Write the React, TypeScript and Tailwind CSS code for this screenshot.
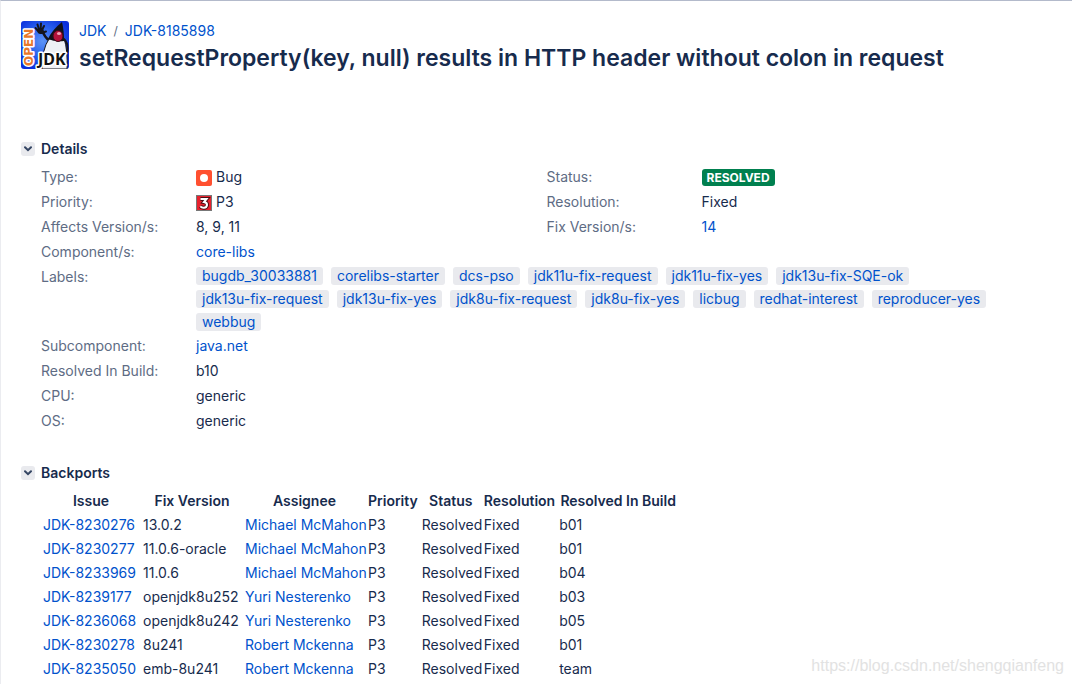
import { ReactNode, useState } from "react";

const LABELS = [
  "bugdb_30033881",
  "corelibs-starter",
  "dcs-pso",
  "jdk11u-fix-request",
  "jdk11u-fix-yes",
  "jdk13u-fix-SQE-ok",
  "jdk13u-fix-request",
  "jdk13u-fix-yes",
  "jdk8u-fix-request",
  "jdk8u-fix-yes",
  "licbug",
  "redhat-interest",
  "reproducer-yes",
  "webbug",
];

const BACKPORTS = [
  { issue: "JDK-8230276", version: "13.0.2", assignee: "Michael McMahon", build: "b01" },
  { issue: "JDK-8230277", version: "11.0.6-oracle", assignee: "Michael McMahon", build: "b01" },
  { issue: "JDK-8233969", version: "11.0.6", assignee: "Michael McMahon", build: "b04" },
  { issue: "JDK-8239177", version: "openjdk8u252", assignee: "Yuri Nesterenko", build: "b03" },
  { issue: "JDK-8236068", version: "openjdk8u242", assignee: "Yuri Nesterenko", build: "b05" },
  { issue: "JDK-8230278", version: "8u241", assignee: "Robert Mckenna", build: "b01" },
  { issue: "JDK-8235050", version: "emb-8u241", assignee: "Robert Mckenna", build: "team" },
];

function ProjectLogo() {
  return (
    <svg width="48" height="48" viewBox="0 0 48 48" className="shrink-0 rounded-[3px]" role="img" aria-label="OpenJDK">
      <defs>
        <radialGradient id="sky" cx="45%" cy="42%" r="60%">
          <stop offset="0" stopColor="#5c93f5" />
          <stop offset="0.5" stopColor="#2a62ee" />
          <stop offset="1" stopColor="#0a2fdc" />
        </radialGradient>
      </defs>
      <rect width="48" height="48" fill="url(#sky)" />
      {/* raised arm and hand */}
      <path d="M28 19 Q24 17 21 9" fill="none" stroke="#15151c" strokeWidth="2.5" />
      <path
        d="M18 11 L14.5 7 M18.5 10 L16.5 3.5 M19.5 10 L20 2.5 M20.5 10 L23 5 M20 12 L25 10.5"
        stroke="#15151c"
        strokeWidth="2"
        strokeLinecap="round"
      />
      <circle cx="19.5" cy="10" r="3" fill="#15151c" />
      {/* body, head, nose */}
      <path d="M28 18 Q21 28 21 48 L46 48 Q47 30 43 17 Z" fill="#eef0f5" stroke="#15151c" strokeWidth="1" />
      <path d="M41 1 Q31 9 27 18 Q34 21 43 20 Q43 9 41 1 Z" fill="#111118" />
      <path d="M43 18 Q48 23 46 32" fill="none" stroke="#15151c" strokeWidth="2" />
      <ellipse cx="37" cy="15" rx="5" ry="5.5" fill="#b3123a" stroke="#3b0a18" strokeWidth="1" />
      <ellipse cx="38" cy="12.5" rx="2" ry="1.5" fill="#f0a7b6" />
      <text
        transform="translate(12 45) rotate(-90)"
        fontFamily="'DejaVu Sans', sans-serif"
        fontWeight="700"
        fontSize="12"
        fill="#e8782a"
        stroke="#fff"
        strokeWidth="3"
        strokeLinejoin="round"
        paintOrder="stroke"
      >
        OPEN
      </text>
      <text
        x="17"
        y="44"
        fontFamily="'Noto Sans', sans-serif"
        fontWeight="700"
        fontSize="16"
        fill="#111"
        stroke="#fff"
        strokeWidth="3"
        strokeLinejoin="round"
        paintOrder="stroke"
      >
        JDK
      </text>
    </svg>
  );
}

function BugIcon() {
  return (
    <svg width="16" height="16" viewBox="0 0 16 16" className="mt-0.5" aria-hidden="true">
      <rect width="16" height="16" rx="2" fill="#ff5030" />
      <circle cx="8" cy="8" r="4" fill="#fff" />
    </svg>
  );
}

function PriorityIcon() {
  return (
    <svg width="16" height="16" viewBox="0 0 16 16" className="mt-0.5" aria-hidden="true">
      <rect x="0.5" y="0.5" width="15" height="15" fill="#e8212d" stroke="#777" />
      <path
        d="M4.5 4 H10.5 L8 7 Q11.2 7.5 11 10 Q10.5 13 7.5 12.7 Q5.5 12.6 4.3 11.4"
        fill="none"
        stroke="#4a0d12"
        strokeWidth="4"
      />
      <path
        d="M4.5 4 H10.5 L8 7 Q11.2 7.5 11 10 Q10.5 13 7.5 12.7 Q5.5 12.6 4.3 11.4"
        fill="none"
        stroke="#fff"
        strokeWidth="2"
      />
    </svg>
  );
}

function Link({ children }: { children: ReactNode }) {
  return (
    <a href="#" className="text-[#0052cc] hover:underline">
      {children}
    </a>
  );
}

function Section({ title, className, children }: { title: string; className: string; children: ReactNode }) {
  const [isOpen, setIsOpen] = useState(true);

  return (
    <section className={className}>
      <h2 className="h-5">
        <button
          aria-expanded={isOpen}
          onClick={() => setIsOpen(!isOpen)}
          className="flex h-5 items-center gap-1.5 font-semibold"
        >
          <span className="flex size-3.5 items-center justify-center rounded-[3px] bg-[#e9eaee]">
            <svg width="8" height="6" viewBox="0 0 8 6" className={isOpen ? "" : "-rotate-90"}>
              <path d="M1 1.2 L4 4.2 L7 1.2" fill="none" stroke="#344563" strokeWidth="2" strokeLinecap="round" />
            </svg>
          </span>
          {title}
        </button>
      </h2>
      {isOpen && <div className="pl-5">{children}</div>}
    </section>
  );
}

function Field({ name, children }: { name: string; children: ReactNode }) {
  return (
    <div className="flex leading-[25px]">
      <dt className="w-[155px] shrink-0 text-[#5e6c84]">{name}:</dt>
      <dd className="flex min-w-0 items-center gap-1">{children}</dd>
    </div>
  );
}

function App() {
  return (
    <main className="relative min-h-screen border-t border-l border-t-[#b3bacb] border-l-[#ebecf0] bg-white pr-5 pl-5 pt-5 font-['Inter','Liberation_Sans',sans-serif] text-sm text-[#172b4d]">
      <header className="flex gap-2.5">
        <ProjectLogo />
        <div>
          <nav aria-label="Breadcrumb" className="flex h-5 items-center gap-[7px]">
            <Link>JDK</Link>
            <span className="text-xs text-[#5e6c84]">/</span>
            <Link>JDK-8185898</Link>
          </nav>
          <h1 className="mt-0.5 text-[23px] leading-[30px] font-semibold">
            setRequestProperty(key, null) results in HTTP header without colon in request
          </h1>
        </div>
      </header>

      <Section title="Details" className="mt-[66px]">
        <div className="mt-[5px] grid grid-cols-2">
          <dl>
            <Field name="Type">
              <BugIcon />
              Bug
            </Field>
            <Field name="Priority">
              <PriorityIcon />
              P3
            </Field>
            <Field name="Affects Version/s">8, 9, 11</Field>
          </dl>
          <dl>
            <Field name="Status">
              <span className="mt-0.5 rounded-[3px] bg-[#00804f] px-[5px] text-xs leading-[17px] font-bold text-white">
                RESOLVED
              </span>
            </Field>
            <Field name="Resolution">Fixed</Field>
            <Field name="Fix Version/s">
              <Link>14</Link>
            </Field>
          </dl>
        </div>
        <dl>
          <Field name="Component/s">
            <Link>core-libs</Link>
          </Field>
          <Field name="Labels">
            <ul className="flex flex-wrap gap-x-2 gap-y-[5px] pt-[3px] pr-3 pb-0.5">
              {LABELS.map((label) => (
                <li key={label} className="rounded-[3px] bg-[#e9eaee] px-1.5 leading-[18px]">
                  <Link>{label}</Link>
                </li>
              ))}
            </ul>
          </Field>
          <Field name="Subcomponent">
            <Link>java.net</Link>
          </Field>
          <Field name="Resolved In Build">b10</Field>
          <Field name="CPU">generic</Field>
          <Field name="OS">generic</Field>
        </dl>
      </Section>

      <Section title="Backports" className="mt-[30px]">
        <table className="mt-1.5 ml-0.5 table-fixed whitespace-nowrap leading-6">
          <thead>
            <tr className="text-center">
              <th className="w-[100px] pr-1 font-semibold">Issue</th>
              <th className="w-[102px] pr-1 font-semibold">Fix Version</th>
              <th className="w-[123px] pr-1 font-semibold">Assignee</th>
              <th className="w-[53px] pr-1 font-semibold">Priority</th>
              <th className="w-[62px] pr-1 font-semibold">Status</th>
              <th className="w-[75px] pr-1 font-semibold">Resolution</th>
              <th className="w-[118px] font-semibold">Resolved In Build</th>
            </tr>
          </thead>
          <tbody>
            {BACKPORTS.map((row) => (
              <tr key={row.issue}>
                <td>
                  <Link>{row.issue}</Link>
                </td>
                <td>{row.version}</td>
                <td>
                  <Link>{row.assignee}</Link>
                </td>
                <td>P3</td>
                <td>Resolved</td>
                <td>Fixed</td>
                <td>{row.build}</td>
              </tr>
            ))}
          </tbody>
        </table>
      </Section>

      <p className="pointer-events-none absolute right-2 bottom-1.5 font-['Liberation_Sans',Arial,sans-serif] text-base text-[#e2e2e2]">
        https://blog.csdn.net/shengqianfeng
      </p>
    </main>
  );
}

export default App;
